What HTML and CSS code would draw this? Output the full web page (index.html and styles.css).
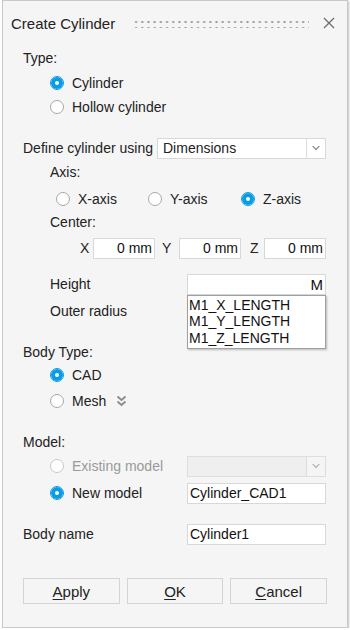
FILE: index.html
```html
<!DOCTYPE html>
<html lang="en">

<head>
    <meta charset="UTF-8">
    <meta name="viewport" content="width=device-width, initial-scale=1.0">
    <title>Create Cylinder</title>
    <link rel="stylesheet" href="styles.css">
</head>

<body>
    <div class="dialog">
        <div class="title-bar">
            <span class="title">Create Cylinder</span>
            <span class="grip"></span>
            <svg class="close" width="12" height="12" viewBox="0 0 12 12">
                <path d="M1 1 L11 11 M11 1 L1 11" stroke="#6e6e6e" stroke-width="1.3" fill="none" />
            </svg>
        </div>

        <div class="content">
            <div class="row type-label">Type:</div>
            <div class="row indent mt3"><span class="radio checked"></span>Cylinder</div>
            <div class="row indent mt2"><span class="radio"></span>Hollow cylinder</div>

            <div class="row define">
                <span class="define-label">Define cylinder using</span>
                <div class="combo">
                    <span class="combo-text">Dimensions</span>
                    <span class="combo-arrow"><svg width="8" height="5" viewBox="0 0 8 5"><path d="M0 0 L4 4.5 L8 0 L6.5 0 L4 2.5 L1.5 0 Z" fill="#8a8a8a" /></svg></span>
                </div>
            </div>
            <div class="row sub mt2">Axis:</div>
            <div class="row axis-row">
                <label class="axis x"><span class="radio"></span>X-axis</label>
                <label class="axis y"><span class="radio"></span>Y-axis</label>
                <label class="axis z"><span class="radio checked"></span>Z-axis</label>
            </div>
            <div class="row sub mt1">Center:</div>
            <div class="row xyz">
                <span class="coord-label lx">X</span>
                <span class="field coord">0 mm</span>
                <span class="coord-label ly">Y</span>
                <span class="field coord">0 mm</span>
                <span class="coord-label lz">Z</span>
                <span class="field coord">0 mm</span>
            </div>

            <div class="row sub height-row">
                <span class="param-label">Height</span>
                <div class="height-wrap">
                    <span class="field wide right">M</span>
                    <ul class="suggest">
                        <li>M1_X_LENGTH</li>
                        <li>M1_Y_LENGTH</li>
                        <li>M1_Z_LENGTH</li>
                    </ul>
                </div>
            </div>
            <div class="row sub mt5">Outer radius</div>

            <div class="row section">Body Type:</div>
            <div class="row indent mt1"><span class="radio checked"></span>CAD</div>
            <div class="row indent mt4"><span class="radio"></span>Mesh
                <svg class="more" width="11" height="12" viewBox="0 0 11 12">
                    <path d="M1.5 1.5 L5.5 5 L9.5 1.5 M1.5 6.5 L5.5 10 L9.5 6.5" stroke="#8a8a8a" stroke-width="1.8" fill="none" />
                </svg>
            </div>

            <div class="row section">Model:</div>
            <div class="row indent mt2 disabled">
                <span class="param-left"><span class="radio"></span>Existing model</span>
                <div class="combo disabled-combo">
                    <span class="combo-text"></span>
                    <span class="combo-arrow"><svg width="8" height="5" viewBox="0 0 8 5"><path d="M0 0 L4 4.5 L8 0 L6.5 0 L4 2.5 L1.5 0 Z" fill="#b5b5b5" /></svg></span>
                </div>
            </div>
            <div class="row indent mt5">
                <span class="param-left"><span class="radio checked"></span>New model</span>
                <span class="field wide">Cylinder_CAD1</span>
            </div>

            <div class="row section">
                <span class="name-label">Body name</span>
                <span class="field wide">Cylinder1</span>
            </div>

            <div class="buttons">
                <button class="btn"><u>A</u>pply</button>
                <button class="btn"><u>O</u>K</button>
                <button class="btn"><u>C</u>ancel</button>
            </div>
        </div>
    </div>
</body>

</html>
```

FILE: styles.css
```css
body {
    margin: 0;
    padding: 0;
    background-color: #ffffff;
    font-family: "Liberation Sans", Arial, sans-serif;
    font-size: 14px;
    color: #222222;
}

.dialog {
    margin-left: 2px;
    width: 344px;
    height: 626px;
    background-color: #f5f5f5;
    border: 1px solid #c9c9c9;
    box-shadow: 1px 1px 2px rgba(0, 0, 0, 0.25);
}

.title-bar {
    height: 44px;
    display: flex;
    align-items: center;
    padding: 0 10px 0 8px;
}

.title {
    font-size: 15px;
    color: #222222;
}

.grip {
    flex: 1;
    height: 8px;
    margin: 1px 14px 0 18px;
    background-image: radial-gradient(circle, #9a9a9a 0.9px, transparent 1.2px);
    background-size: 6.2px 6px;
    background-position: 0 -1px;
}

.close {
    margin-right: 2px;
}

.content {
    padding: 2px 20px 0 20px;
}

.row {
    height: 22px;
    display: flex;
    align-items: center;
}

.mt1 { margin-top: 1px; }
.mt2 { margin-top: 2px; }
.mt3 { margin-top: 3px; }
.mt4 { margin-top: 4px; }
.mt5 { margin-top: 5px; }

.indent {
    padding-left: 27px;
}

.sub {
    padding-left: 27px;
}

.section {
    margin-top: 19px;
}

.radio {
    width: 12px;
    height: 12px;
    border-radius: 50%;
    border: 1px solid #a8a8a8;
    background-color: #ffffff;
    margin-right: 8px;
    box-sizing: content-box;
    flex-shrink: 0;
}

.radio.checked {
    border-color: #0a9be6;
    background-color: #ffffff;
    box-shadow: inset 0 0 0 4px #0a9be6;
}

.define {
    margin-top: 19px;
}

.define-label {
    width: 134px;
    flex-shrink: 0;
}

.combo {
    width: 169px;
    height: 21px;
    box-sizing: border-box;
    background-color: #ffffff;
    border: 1px solid #d8d8d8;
    display: flex;
    align-items: center;
    flex-shrink: 0;
}

.combo-text {
    flex: 1;
    padding-left: 5px;
}

.combo-arrow {
    width: 18px;
    height: 19px;
    border-left: 1px solid #dcdcdc;
    display: flex;
    align-items: center;
    justify-content: center;
}

.axis-row {
    margin-top: 5px;
    padding-left: 33px;
}

.axis {
    display: flex;
    align-items: center;
}

.axis.x { width: 92px; }
.axis.y { width: 93px; }

.xyz {
    margin-top: 4px;
    padding-left: 57px;
}

.coord-label {
    flex-shrink: 0;
}

.lx { width: 13px; }
.ly { width: 17px; margin-left: 7px; }
.lz { width: 14px; margin-left: 9px; }

.field {
    height: 21px;
    box-sizing: border-box;
    background-color: #ffffff;
    border: 1px solid #d8d8d8;
    display: flex;
    align-items: center;
    color: #111111;
    flex-shrink: 0;
}

.coord {
    width: 62px;
    justify-content: flex-end;
    padding-right: 2px;
}

.height-row {
    margin-top: 14px;
}

.param-label {
    width: 137px;
    flex-shrink: 0;
}

.height-wrap {
    position: relative;
}

.wide {
    width: 139px;
    padding: 0 2px;
}

.right {
    justify-content: flex-end;
    font-size: 15px;
}

.suggest {
    position: absolute;
    top: 21px;
    left: 0;
    width: 139px;
    box-sizing: border-box;
    margin: 0;
    padding: 1px 0 2px 1px;
    list-style: none;
    background-color: #ffffff;
    border: 1px solid #a0a0a0;
    box-shadow: 1px 1px 2px rgba(0, 0, 0, 0.25);
    font-size: 14px;
    color: #111111;
    line-height: 16.5px;
    z-index: 2;
}

.more {
    margin-left: 10px;
}

.param-left {
    width: 137px;
    flex-shrink: 0;
    display: flex;
    align-items: center;
}

.disabled .param-left {
    color: #9a9a9a;
}

.disabled .radio {
    border-color: #c8c8c8;
}

.disabled-combo {
    width: 139px;
    background-color: #efefef;
    border-color: #dedede;
}

.disabled-combo .combo-arrow {
    background-color: #f5f5f5;
}

.name-label {
    width: 164px;
    flex-shrink: 0;
}

.buttons {
    margin-top: 33px;
    display: flex;
    gap: 7px;
}

.btn {
    width: 97px;
    height: 26px;
    background-color: #f5f5f5;
    border: 1px solid #d4d4d4;
    font-family: "Liberation Sans", Arial, sans-serif;
    font-size: 15px;
    color: #222222;
    padding: 0;
}

.btn u {
    text-decoration-thickness: 1px;
    text-underline-offset: 2px;
}
```
